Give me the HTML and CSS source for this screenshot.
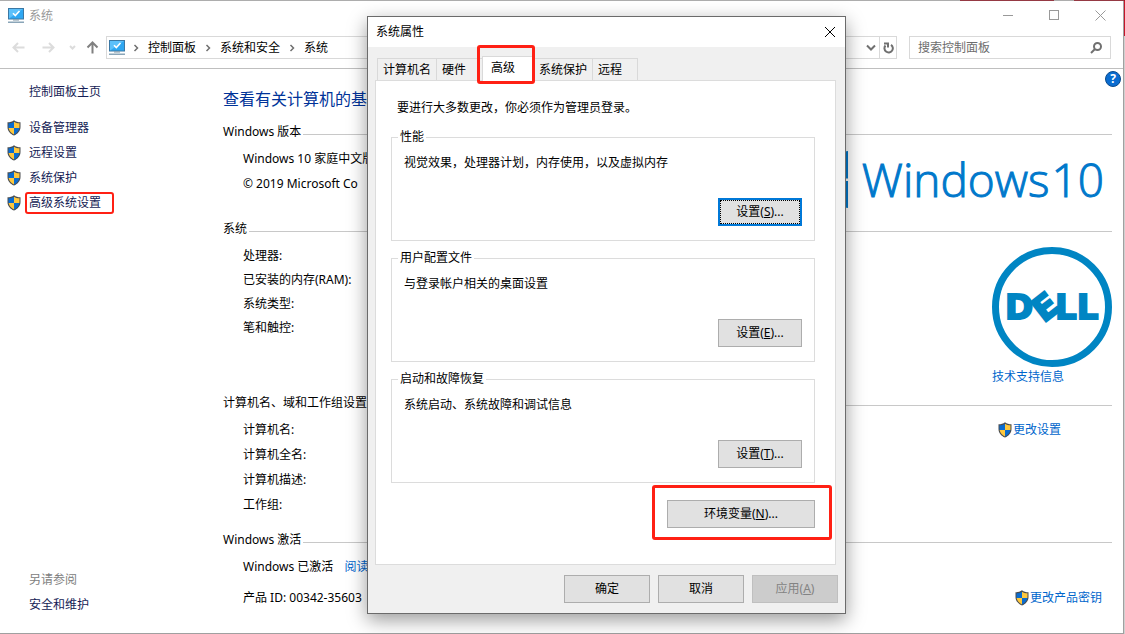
FILE: index.html
```html
<!DOCTYPE html>
<html lang="zh-CN">
<head>
    <meta charset="UTF-8">
    <meta name="viewport" content="width=device-width, initial-scale=1.0">
    <title>系统</title>
    <link rel="stylesheet" href="styles.css">
</head>
<body>
    <!-- 公用图标 -->
    <svg class="sprite" aria-hidden="true">
        <symbol id="icon-shield" viewBox="0 0 14 16">
            <path d="M7 0.3C5.2 1.7 3 2.3 0.5 2.3V7c0 4 2.6 6.8 6.5 8.6C10.9 13.8 13.5 11 13.5 7V2.3C11 2.3 8.8 1.7 7 0.3z" fill="#4a4d50"/>
            <path d="M7 1.7V8H1.6C1.5 7 1.5 5 1.5 3.3C3.6 3.2 5.4 2.7 7 1.7z" fill="#0a6cd0"/>
            <path d="M7 1.7V8h5.4c0.1-1 0.1-3 0.1-4.7C10.4 3.2 8.6 2.7 7 1.7z" fill="#ffc83d"/>
            <path d="M7 8v6.4C4 12.9 2.1 11 1.6 8z" fill="#ffc83d"/>
            <path d="M7 8v6.4c3-1.5 4.9-3.4 5.4-6.4z" fill="#0a6cd0"/>
        </symbol>
        <symbol id="icon-computer" viewBox="0 0 16 16">
            <rect x="0.5" y="0.5" width="15" height="10.5" fill="#2ea7f2" stroke="#3b78a4"/>
            <path d="M1 10.5V1h14z" fill="#5cc0fa"/>
            <path d="M5 5.2L7.3 7.5L11.5 3" fill="none" stroke="#fff" stroke-width="1.6"/>
            <rect x="5" y="11.5" width="6" height="1" fill="#7d93a3"/>
            <rect x="0" y="13.5" width="16" height="1.5" fill="#8aa5b8"/>
        </symbol>
        <symbol id="icon-chevron" viewBox="0 0 6 8">
            <path d="M1.5 1L4.5 4L1.5 7" fill="none" stroke="#707070" stroke-width="1.5"/>
        </symbol>
    </svg>

    <div class="window">
        <header class="titlebar">
            <svg class="computer"><use href="#icon-computer"/></svg>
            <span class="titlebar-text">系统</span>
            <div class="window-controls">
                <button aria-label="最小化"><svg width="11" height="11"><path d="M0 5.5H10"/></svg></button>
                <button aria-label="最大化"><svg width="11" height="11"><rect x="0.5" y="0.5" width="9" height="9"/></svg></button>
                <button aria-label="关闭"><svg width="11" height="11"><path d="M0.5 0.5L10.5 10.5M10.5 0.5L0.5 10.5"/></svg></button>
            </div>
        </header>

        <nav class="navbar">
            <div class="nav-arrows">
                <button class="nav-button" aria-label="后退" disabled><svg width="13" height="11"><path d="M12.5 5.5H1.5M6 1L1.5 5.5L6 10"/></svg></button>
                <button class="nav-button" aria-label="前进" disabled><svg width="13" height="11"><path d="M0.5 5.5H11.5M7 1L11.5 5.5L7 10"/></svg></button>
                <button class="nav-button nav-recent" aria-label="最近浏览的位置" disabled><svg width="7" height="5"><path d="M1 1L3.5 3.5L6 1"/></svg></button>
                <button class="nav-button nav-up" aria-label="上移"><svg width="13" height="13"><path d="M6.5 12.5V1.5M1.5 6.5L6.5 1.5L11.5 6.5"/></svg></button>
            </div>
            <div class="address">
                <svg class="computer"><use href="#icon-computer"/></svg>
                <svg class="chevron"><use href="#icon-chevron"/></svg>
                <a href="#">控制面板</a>
                <svg class="chevron"><use href="#icon-chevron"/></svg>
                <a href="#">系统和安全</a>
                <svg class="chevron"><use href="#icon-chevron"/></svg>
                <a href="#">系统</a>
                <button class="address-drop" aria-label="以前的位置"><svg width="10" height="7"><path d="M1 1.5L5 5.5L9 1.5"/></svg></button>
                <button class="address-refresh" aria-label="刷新"><svg width="11" height="12"><path d="M8 2.8A4.2 4.2 0 1 1 2.5 3.5M1 1.5H5V5.5"/></svg></button>
            </div>
            <div class="search">
                <input type="text" placeholder="搜索控制面板" aria-label="搜索控制面板">
                <svg width="12" height="12"><circle cx="7.5" cy="4.5" r="3.5"/><path d="M5 7L1 11"/></svg>
            </div>
        </nav>

        <div class="content">
            <aside class="sidebar">
                <div class="side-links">
                    <a class="side-home" href="#">控制面板主页</a>
                    <a class="side-link" href="#"><svg class="shield"><use href="#icon-shield"/></svg>设备管理器</a>
                    <a class="side-link" href="#"><svg class="shield"><use href="#icon-shield"/></svg>远程设置</a>
                    <a class="side-link" href="#"><svg class="shield"><use href="#icon-shield"/></svg>系统保护</a>
                    <a class="side-link marked" href="#"><svg class="shield"><use href="#icon-shield"/></svg>高级系统设置</a>
                </div>
                <div class="see-also">
                    <span>另请参阅</span>
                    <a href="#">安全和维护</a>
                </div>
            </aside>

            <main class="main">
                <button class="help" aria-label="帮助">?</button>
                <h1>查看有关计算机的基</h1>

                <section class="section section-edition">
                    <h2>Windows 版本</h2>
                    <div class="section-body">
                        <ul class="rows">
                            <li>Windows 10 家庭中文版</li>
                            <li>© 2019 Microsoft Co</li>
                        </ul>
                        <div class="windows-logo">
                            <svg width="57" height="57" viewBox="0 0 57 57"><path d="M0 8L23 5V27.5H0zM25 4.7L57 0V27.5H25zM0 30H23V52L0 49zM25 30H57V57L25 52.3z" fill="#0078cb"/></svg>
                            <span class="windows-name">Windows</span><span class="windows-name">10</span>
                        </div>
                    </div>
                </section>

                <section class="section section-system">
                    <h2>系统</h2>
                    <div class="section-body">
                        <ul class="rows rows-tight">
                            <li>处理器:</li>
                            <li>已安装的内存(RAM):</li>
                            <li>系统类型:</li>
                            <li>笔和触控:</li>
                        </ul>
                        <div class="vendor">
                            <svg class="dell" viewBox="0 0 120 120" role="img" aria-label="DELL">
                                <circle cx="60" cy="60" r="56.5"/>
                                <text x="13" y="71.5">D</text>
                                <text x="0" y="12.5" text-anchor="middle" transform="translate(53 59.5) rotate(-38)">E</text>
                                <text x="63" y="71.5">LL</text>
                            </svg>
                            <a class="link" href="#">技术支持信息</a>
                        </div>
                    </div>
                </section>

                <section class="section">
                    <h2>计算机名、域和工作组设置</h2>
                    <div class="section-body">
                        <ul class="rows">
                            <li>计算机名:</li>
                            <li>计算机全名:</li>
                            <li>计算机描述:</li>
                            <li>工作组:</li>
                        </ul>
                        <a class="link shield-link change-settings" href="#"><svg class="shield"><use href="#icon-shield"/></svg>更改设置</a>
                    </div>
                </section>

                <section class="section">
                    <h2>Windows 激活</h2>
                    <div class="section-body">
                        <ul class="rows rows-loose">
                            <li>Windows 已激活 <a class="link read-link" href="#">阅读</a></li>
                            <li>产品 ID: 00342-35603</li>
                        </ul>
                        <a class="link shield-link change-key" href="#"><svg class="shield"><use href="#icon-shield"/></svg>更改产品密钥</a>
                    </div>
                </section>
            </main>
        </div>
    </div>

    <div class="dialog" role="dialog" aria-labelledby="dialog-title">
        <div class="dialog-title">
            <span id="dialog-title">系统属性</span>
            <button class="dialog-close" aria-label="关闭"><svg width="12" height="12"><path d="M1 1L11 11M11 1L1 11"/></svg></button>
        </div>

        <div class="tabs" role="tablist">
            <button class="tab" role="tab">计算机名</button>
            <button class="tab" role="tab">硬件</button>
            <button class="tab active" role="tab" aria-selected="true">高级</button>
            <button class="tab" role="tab">系统保护</button>
            <button class="tab" role="tab">远程</button>
        </div>

        <div class="panel" role="tabpanel">
            <p class="panel-note">要进行大多数更改，你必须作为管理员登录。</p>

            <fieldset class="group">
                <legend>性能</legend>
                <p>视觉效果，处理器计划，内存使用，以及虚拟内存</p>
                <button class="button focused">设置(<u>S</u>)...</button>
            </fieldset>
            <fieldset class="group">
                <legend>用户配置文件</legend>
                <p>与登录帐户相关的桌面设置</p>
                <button class="button">设置(<u>E</u>)...</button>
            </fieldset>
            <fieldset class="group">
                <legend>启动和故障恢复</legend>
                <p>系统启动、系统故障和调试信息</p>
                <button class="button">设置(<u>T</u>)...</button>
            </fieldset>

            <div class="env">
                <button class="button env-button">环境变量(<u>N</u>)...</button>
            </div>
        </div>

        <div class="dialog-footer">
            <button class="button">确定</button>
            <button class="button">取消</button>
            <button class="button" disabled>应用(<u>A</u>)</button>
        </div>
    </div>
</body>
</html>
```
FILE: styles.css
```css
* {
    box-sizing: border-box;
    margin: 0;
    padding: 0;
}

body {
    font-family: "Noto Sans", "Noto Sans CJK SC", sans-serif;
    font-size: 12px;
    line-height: 20px;
    color: #000;
    min-height: 100vh;
    display: flex;
    overflow: hidden;
    /* 窗口后面露出的红色边条 */
    background:
        linear-gradient(#a80f20, #a80f20) right 71px top 0 / 94px 1px no-repeat,
        linear-gradient(#a80f20, #a80f20) right top / 51px 1px no-repeat,
        linear-gradient(#c4162a, #c4162a) right top / 1px 36px no-repeat,
        #d0d0d0;
}

button,
input {
    font: inherit;
    color: inherit;
    border: none;
    background: none;
}

a {
    color: inherit;
    text-decoration: none;
}

ul {
    list-style: none;
}

svg {
    flex: none;
}

.sprite {
    position: absolute;
    width: 0;
    height: 0;
}

.computer {
    width: 16px;
    height: 16px;
}

.chevron {
    width: 6px;
    height: 8px;
}

.shield {
    width: 14px;
    height: 16px;
}

/* 主窗口 */
.window {
    flex: 1;
    display: flex;
    flex-direction: column;
    margin: 1px 1px 0 0;
    background: #fff;
    border-right: 1px solid #a0a0a0;
    border-bottom: 1px solid #a0a0a0;
    box-shadow: 0 -1px 0 rgba(120, 120, 120, 0.4);
}

.titlebar {
    display: flex;
    align-items: center;
    height: 29px;
    padding-left: 8px;
    color: #999;
}

.titlebar-text {
    margin-left: 5px;
}

.window-controls {
    display: flex;
    margin-left: auto;
}

.window-controls button {
    width: 46px;
    height: 29px;
    display: flex;
    align-items: center;
    justify-content: center;
}

.window-controls svg {
    fill: none;
    stroke: #999;
}

.navbar {
    display: flex;
    align-items: center;
    gap: 12px;
    padding: 6px 12px 9px;
    border-bottom: 1px solid #bfbfbf;
}

.nav-arrows {
    display: flex;
    align-items: center;
    gap: 17px;
    width: 82px;
}

.nav-button {
    display: flex;
}

.nav-button svg {
    fill: none;
    stroke: #dcdcdc;
    stroke-width: 2;
}

.nav-recent {
    margin: 0 -7px 0 -3px;
}

.nav-up svg {
    stroke: #808080;
}

.address {
    flex: 1;
    display: flex;
    align-items: center;
    gap: 9px;
    height: 23px;
    padding-left: 2px;
    border: 1px solid #d9d9d9;
}

.address .computer {
    margin-right: -1px;
}

.address button {
    height: 21px;
    display: flex;
    align-items: center;
    justify-content: center;
}

.address button svg {
    fill: none;
    stroke: #707070;
    stroke-width: 2;
}

.address-drop {
    width: 16px;
    margin-left: auto;
}

.address .address-refresh {
    width: 17px;
    margin-left: -9px;
    border-left: 1px solid #d9d9d9;
}

.search {
    display: flex;
    align-items: center;
    width: 202px;
    height: 23px;
    padding: 0 8px;
    border: 1px solid #d9d9d9;
}

.search input {
    flex: 1;
    min-width: 0;
    outline: none;
}

.search input::placeholder {
    color: #6d6d6d;
    opacity: 1;
}

.search svg {
    fill: none;
    stroke: #707070;
    stroke-width: 2;
}

.content {
    flex: 1;
    display: flex;
}

/* 左侧栏 */
.sidebar {
    width: 223px;
    display: flex;
    flex-direction: column;
    justify-content: space-between;
    padding: 10px 0 16px 7px;
    color: #151c55;
    line-height: 25px;
}

.side-links,
.see-also {
    display: flex;
    flex-direction: column;
    align-items: flex-start;
}

.side-home {
    margin: 0 0 11px 22px;
}

.side-link {
    display: flex;
    align-items: center;
    gap: 8px;
    position: relative;
}

.see-also {
    padding-left: 22px;
}

.see-also span {
    color: #808080;
}

/* 红框标注 */
.marked::after,
.tab.active::after,
.env::after {
    content: "";
    position: absolute;
    box-sizing: border-box;
    border: 3px solid #ff2014;
    border-radius: 3px;
    pointer-events: none;
}

.marked::after {
    inset: 2px -13px 1px 18px;
    border-width: 2px;
}

/* 右侧内容 */
.main {
    flex: 1;
    position: relative;
    padding: 18px 11px 0 0;
}

.help {
    position: absolute;
    top: 2px;
    right: 2px;
    width: 16px;
    height: 16px;
    border: 1px solid #0a4a8c;
    border-radius: 50%;
    background: #0a6cd0;
    color: #fff;
    font-weight: 700;
    line-height: 14px;
}

h1 {
    font-size: 16px;
    font-weight: 400;
    line-height: 24px;
    color: #003399;
    margin-bottom: 10px;
}

h2 {
    display: flex;
    align-items: flex-end;
    gap: 2px;
    font-size: 12px;
    font-weight: 400;
    line-height: 22px;
    margin-bottom: 3px;
}

h2::after {
    content: "";
    flex: 1;
    height: 1px;
    margin-bottom: 8px;
    background: #c8c8c8;
}

.section {
    margin-bottom: 12px;
}

.section-edition {
    margin-bottom: 10px;
}

.section-system {
    margin-bottom: 5px;
}

.section-body {
    display: flex;
    justify-content: space-between;
    padding-left: 20px;
}

.rows {
    line-height: 25px;
}

.rows-tight {
    line-height: 24px;
    padding-top: 1px;
}

.rows-loose li + li {
    margin-top: 6px;
}

.read-link {
    margin-left: 8px;
}

.link {
    color: #0066cc;
}

.windows-logo {
    display: flex;
    align-items: center;
    gap: 2px;
    height: 62px;
    padding: 5px 8px 0 0;
}

.windows-logo svg {
    margin-right: 12px;
}

.windows-name {
    font-family: "Open Sans", sans-serif;
    font-size: 46px;
    font-weight: 300;
    line-height: 57px;
    color: #0078cb;
    -webkit-text-stroke: 1px #0078cb;
}

.vendor {
    display: flex;
    flex-direction: column;
    padding-top: 4px;
}

.dell {
    width: 120px;
    height: 120px;
}

.dell circle {
    fill: none;
    stroke: #0085c3;
    stroke-width: 7;
}

.dell text {
    font-family: "DejaVu Sans", sans-serif;
    font-size: 34px;
    font-weight: 700;
    fill: #0085c3;
    stroke: #0085c3;
    stroke-width: 2;
}

.shield-link {
    display: flex;
    align-items: center;
    gap: 1px;
    height: 25px;
}

.change-settings {
    margin-right: 51px;
}

.change-key {
    align-self: flex-end;
    margin-right: 10px;
}

/* 系统属性对话框 */
.dialog {
    position: absolute;
    top: 16px;
    left: 367px;
    width: 479px;
    background: #f0f0f0;
    border: 1px solid #6b6b6b;
    box-shadow: 0 6px 18px rgba(0, 0, 0, 0.4);
}

.dialog-title {
    display: flex;
    align-items: center;
    justify-content: space-between;
    height: 30px;
    padding: 0 9px 0 8px;
    background: #fff;
}

.dialog-close {
    display: flex;
}

.dialog-close svg {
    fill: none;
    stroke: #000;
}

.tabs {
    display: flex;
    align-items: flex-end;
    padding: 9px 9px 0;
}

.tab {
    min-width: 46px;
    height: 22px;
    padding: 0 5px;
    text-align: left;
    border: 1px solid #d9d9d9;
    border-width: 1px 0 0 1px;
}

.tab:last-child {
    border-right-width: 1px;
}

.tab.active {
    position: relative;
    z-index: 1;
    width: 51px;
    height: 25px;
    margin-bottom: -1px;
    padding: 0 8px 3px;
    background: #fff;
}

.tab.active::after {
    inset: -12px -2px -3px -6px;
}

.panel {
    margin: 0 9px 0 7px;
    padding: 17px 20px 36px 15px;
    background: #fff;
    border: 1px solid #dcdcdc;
}

.panel-note {
    margin: 0 0 9px 6px;
}

.group {
    display: flex;
    flex-direction: column;
    margin-bottom: 7px;
    padding: 6px 12px 14px;
    border: 1px solid #dcdcdc;
}

.group legend {
    margin-left: -6px;
    padding: 0 2px;
}

.group p {
    margin-bottom: 25px;
}

.button {
    width: 84px;
    height: 28px;
    background: #e1e1e1;
    border: 1px solid #adadad;
}

.group .button {
    align-self: flex-end;
}

.button.focused {
    border: 2px solid #0078d7;
    outline: 1px dotted #000;
    outline-offset: -3px;
}

.button:disabled {
    color: #838383;
    background: #cccccc;
    border-color: #bfbfbf;
}

.env {
    position: relative;
    display: flex;
    justify-content: flex-end;
    margin-top: 17px;
}

.env .env-button {
    width: 148px;
}

.env::after {
    inset: -15px -17px -12px auto;
    width: 180px;
}

.dialog-footer {
    display: flex;
    justify-content: flex-end;
    gap: 8px;
    padding: 10px 7px;
}

.dialog-footer .button {
    width: 86px;
}
```
